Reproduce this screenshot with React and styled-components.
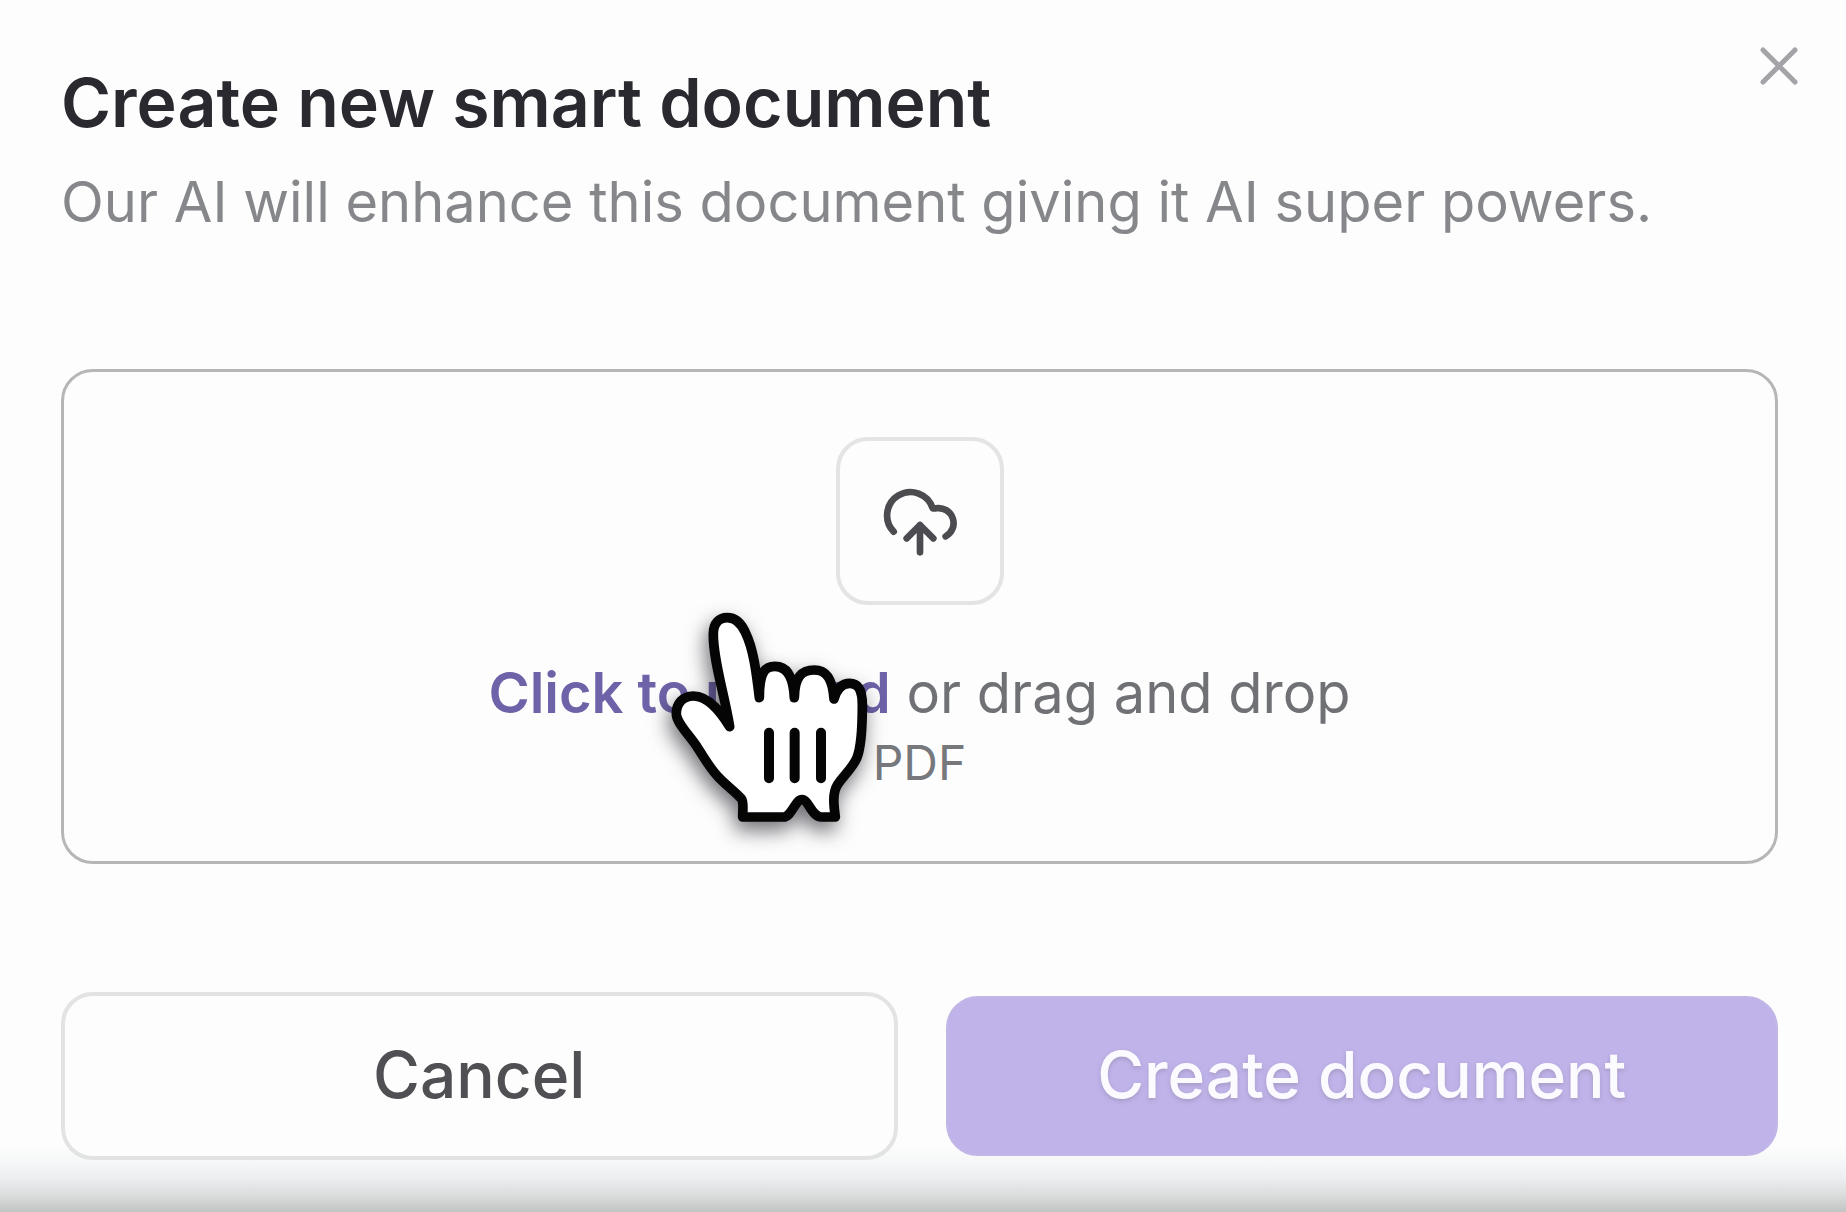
import styled, { createGlobalStyle } from "styled-components";
import { useRef } from "react";

const GlobalStyle = createGlobalStyle`
  *, *::before, *::after {
    box-sizing: border-box;
  }

  body {
    margin: 0;
    background-color: #fdfdfd;
    font-family: Inter, "Liberation Sans", sans-serif;
  }
`;

function CloseIcon() {
  return (
    <svg width="40" height="40" viewBox="0 0 40 40" aria-hidden="true">
      <path
        d="M4 4 L36 36 M36 4 L4 36"
        fill="none"
        stroke="#a3a3a8"
        strokeWidth="5"
        strokeLinecap="round"
      />
    </svg>
  );
}

function CloudUploadIcon() {
  return (
    <svg width="200" height="200" viewBox="0 0 600 600" aria-hidden="true">
      <g
        fill="none"
        stroke="#4b4b50"
        strokeWidth="20"
        strokeLinecap="round"
        strokeLinejoin="round"
      >
        <path d="M221 332 A70 70 0 1 1 338 262 H348 A45 45 0 0 1 377 346" />
        <path d="M260 352 L300 312 L340 352 M300 312 V394" />
      </g>
    </svg>
  );
}

function HandPointer() {
  return (
    <Pointer viewBox="0 0 780 780" aria-hidden="true">
      <path
        d="M308 681 H430 C455 681 465 629 486 629 C507 629 514 681 545 681 H586 C581 645 577 610 592 585 C607 560 637 535 650 505 C663 475 667 410 667 345 C667 300 655 280 629 280 C605 280 590 297 582 327 C578 270 562 240 523 240 C484 240 464 261 463 323 C460 259 441 229 405 229 C377 229 358 242 358 323 C349 246 340 175 316 127 C303 99 285 83 262 83 C237 83 220 99 220 132 C219 210 253 310 269 410 C246 373 208 318 160 318 C128 318 109 341 109 371 C109 399 151 438 174 475 C193 504 210 535 235 561 C257 585 285 604 304 626 C312 637 308 657 308 681 Z"
        fill="#fff"
        stroke="#050505"
        strokeWidth="29"
        strokeLinecap="round"
        strokeLinejoin="round"
      />
      <path
        d="M387 428 V565 M464 428 V565 M543 428 V565"
        fill="none"
        stroke="#050505"
        strokeWidth="30"
        strokeLinecap="round"
      />
    </Pointer>
  );
}

function App() {
  const formRef = useRef(null);

  return (
    <>
      <GlobalStyle />
      <Dialog role="dialog" aria-labelledby="dialog-title">
        <Header>
          <div>
            <Title id="dialog-title">Create new smart document</Title>
            <Subtitle>
              Our AI will enhance this document giving it AI super powers.
            </Subtitle>
          </div>
          <CloseButton type="button" aria-label="Close">
            <CloseIcon />
          </CloseButton>
        </Header>

        <form ref={formRef} onSubmit={(e) => e.preventDefault()}>
          <DropZone htmlFor="document-file">
            <FileInput id="document-file" type="file" accept=".pdf" />
            <IconBox>
              <CloudUploadIcon />
            </IconBox>
            <Prompt>
              <strong>Click to upload</strong> or drag and drop
            </Prompt>
            <FileType>PDF</FileType>
            <HandPointer />
          </DropZone>

          <Actions>
            <CancelButton type="button" onClick={() => formRef.current.reset()}>
              Cancel
            </CancelButton>
            <CreateButton type="submit">Create document</CreateButton>
          </Actions>
        </form>
      </Dialog>
    </>
  );
}

const Dialog = styled.main`
  min-height: 100vh;
  padding: 44px 68px 52px 61px;
  background: linear-gradient(
      to top,
      #c2c4c3 0px,
      #dadbdb 16px,
      #ebecee 32px,
      #f5f6f7 48px,
      #fdfdfd 68px
    )
    no-repeat bottom / 100% 68px;
`;

const Header = styled.header`
  display: flex;
  justify-content: space-between;
  height: 325px;
`;

const Title = styled.h1`
  margin: 16px 0 0;
  color: #29292f;
  font-size: 68px;
  font-weight: 600;
  line-height: 84px;
  white-space: nowrap;
`;

const Subtitle = styled.p`
  margin: 16px 0 0;
  color: #85878b;
  font-size: 56px;
  line-height: 84px;
  white-space: nowrap;
`;

const CloseButton = styled.button`
  display: flex;
  align-items: center;
  justify-content: center;
  flex: none;
  width: 44px;
  height: 44px;
  margin-right: -23px;
  padding: 0;
  border: none;
  background: none;
  cursor: pointer;
`;

const DropZone = styled.label`
  position: relative;
  display: flex;
  flex-direction: column;
  align-items: center;
  height: 495px;
  padding-top: 65px;
  border: 3px solid #b4b6b8;
  border-radius: 32px;
  cursor: pointer;
`;

const FileInput = styled.input`
  position: absolute;
  width: 1px;
  height: 1px;
  opacity: 0;
`;

const IconBox = styled.span`
  display: flex;
  align-items: center;
  justify-content: center;
  width: 168px;
  height: 168px;
  margin-bottom: 48px;
  border: 4px solid #e4e4e5;
  border-radius: 32px;

  svg {
    flex: none;
  }
`;

const Prompt = styled.span`
  color: #6f7175;
  font-size: 56px;
  line-height: 80px;
  white-space: nowrap;

  strong {
    color: #6e62a8;
    font-weight: 600;
  }
`;

const FileType = styled.span`
  color: #76787c;
  font-size: 48px;
  line-height: 60px;
`;

const Pointer = styled.svg`
  position: absolute;
  top: 218px;
  left: calc(50% - 280px);
  width: 260px;
  height: 260px;
  overflow: visible;
  filter: drop-shadow(-3px 9px 10px rgba(20, 20, 30, 0.6));
`;

const Actions = styled.div`
  display: flex;
  align-items: center;
  gap: 48px;
  margin-top: 128px;
`;

const Button = styled.button`
  flex: 1;
  padding: 0 6px 4px;
  font-family: inherit;
  font-size: 64px;
  font-weight: 500;
  border-radius: 32px;
  cursor: pointer;
`;

const CancelButton = styled(Button)`
  height: 168px;
  border: 4px solid #e2e3e3;
  background-color: #fdfdfd;
  color: #505054;
`;

const CreateButton = styled(Button)`
  height: 160px;
  border: 2px solid #c1b6e5;
  background-color: #c0b3ea;
  color: #fbfaff;
  text-shadow: 0 2px 4px rgba(140, 130, 160, 0.5);
`;

export default App;
